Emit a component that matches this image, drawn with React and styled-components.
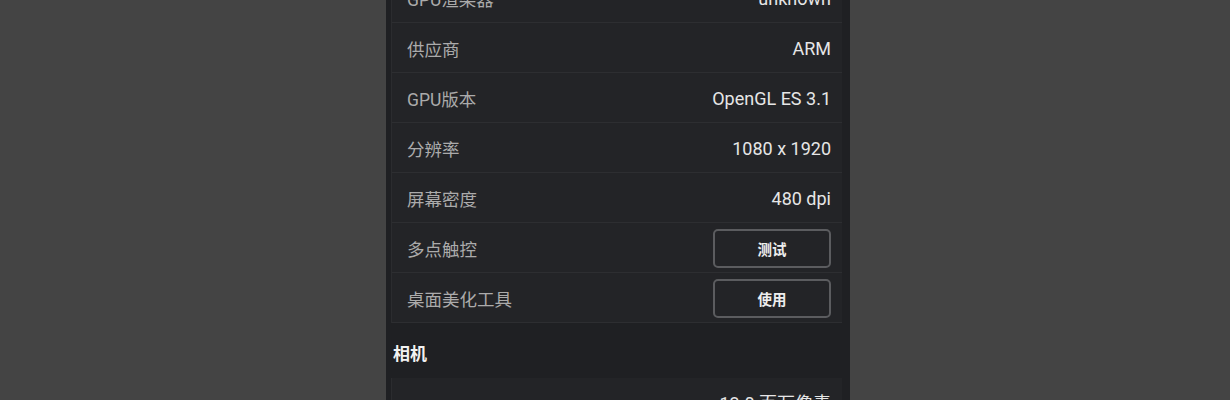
import React from 'react';
import styled, { createGlobalStyle } from 'styled-components';

const GlobalStyle = createGlobalStyle`
  html, body {
    margin: 0;
    padding: 0;
    background: #444444;
    overflow: hidden;
  }
  body {
    font-family: Roboto, "Noto Sans CJK SC", sans-serif;
  }
`;

const rows = [
  { label: 'GPU渲染器', value: 'unknown' },
  { label: '供应商', value: 'ARM' },
  { label: 'GPU版本', value: 'OpenGL ES 3.1' },
  { label: '分辨率', value: '1080 x 1920' },
  { label: '屏幕密度', value: '480 dpi' },
  { label: '多点触控', button: '测试' },
  { label: '桌面美化工具', button: '使用' },
];

const App = () => (
  <>
    <GlobalStyle />
    <Page>
      <Panel>
        <List>
          {rows.map((row) => (
            <Row key={row.label}>
              <Label>{row.label}</Label>
              {row.button ? <ActionButton>{row.button}</ActionButton> : <Value>{row.value}</Value>}
            </Row>
          ))}
        </List>
        <SectionTitle>相机</SectionTitle>
        <List>
          <Row $tall>
            <Label />
            <Value>13.0 百万像素</Value>
          </Row>
        </List>
      </Panel>
    </Page>
  </>
);

export default App;

const Page = styled.div`
  height: 400px;
  display: flex;
  justify-content: center;
  overflow: hidden;
`;

const Panel = styled.div`
  width: 464px;
  margin-left: 6px;
  margin-top: -27px;
  background: #1f2023;
  padding: 0 8px 0 5px;
  box-sizing: border-box;
  display: flex;
  flex-direction: column;
  align-self: flex-start;
`;

const List = styled.div`
  display: flex;
  flex-direction: column;
  border-left: 1px solid #2b2c2f;
`;

const Row = styled.div`
  height: ${({ $tall }) => ($tall ? '64px' : '50px')};
  box-sizing: border-box;
  display: flex;
  align-items: ${({ $tall }) => ($tall ? 'flex-start' : 'center')};
  justify-content: space-between;
  padding: ${({ $tall }) => ($tall ? '11px 11px 0 15px' : '2px 11px 0 15px')};
  background: #232427;
  border-bottom: 1px solid #2d2e31;
`;

const Label = styled.span`
  font-size: 17.5px;
  color: #ababab;
`;

const Value = styled.span`
  font-size: 18px;
  color: #e6e6e6;
`;

const ActionButton = styled.button`
  width: 118px;
  height: 39px;
  margin-top: 0;
  background: transparent;
  border: 2px solid #5b5c5f;
  border-radius: 5px;
  color: #ededed;
  font-family: "Noto Sans CJK SC", sans-serif;
  font-size: 14.5px;
  font-weight: 700;
  padding: 0;
`;

const SectionTitle = styled.div`
  height: 55px;
  display: flex;
  align-items: center;
  padding: 3px 0 0 2px;
  box-sizing: border-box;
  font-family: "Noto Sans CJK SC", sans-serif;
  font-size: 17px;
  font-weight: 700;
  color: #f2f2f2;
`;
